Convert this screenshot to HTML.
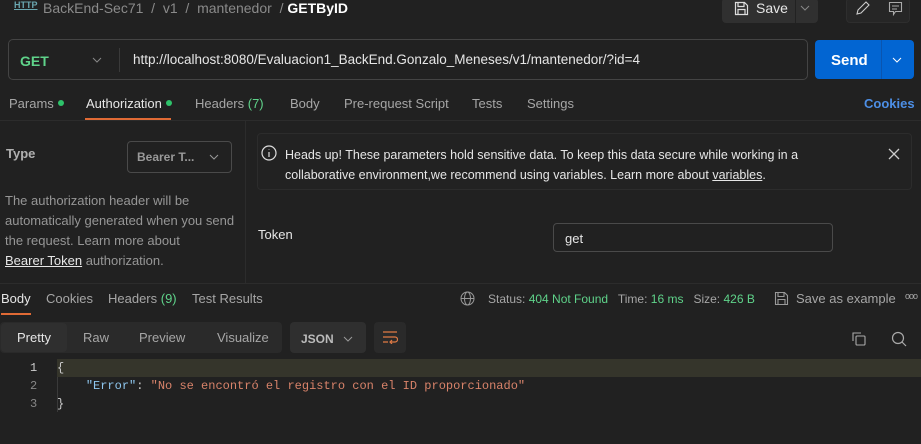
<!DOCTYPE html>
<html><head><meta charset="utf-8"><style>
*{box-sizing:border-box;margin:0;padding:0}
body{width:921px;height:444px;background:#212121;font-family:"Liberation Sans",sans-serif;font-size:13px;color:#a6a6a6;position:relative;overflow:hidden}
.a{position:absolute;white-space:nowrap}
.w{color:#e6e6e6}
.g{color:#5fd38a}
.dot{display:inline-block;width:6px;height:6px;border-radius:3px;background:#2ec26a;margin-left:4px;vertical-align:2px}
.mono{font-family:"Liberation Mono",monospace;font-size:12px;white-space:pre}
</style></head><body>
<!-- top bar -->
<div class="a" style="left:14px;top:0;font-size:9px;color:#6aa7b0;text-decoration:underline;font-weight:bold">HTTP</div>
<div class="a" style="left:43px;top:0;font-size:14px;color:#8a8a8a">BackEnd-Sec71 &nbsp;/&nbsp; v1 &nbsp;/&nbsp; mantenedor &nbsp;/&nbsp;<span style="color:#fff;font-weight:bold">GETByID</span></div>
<div class="a" style="left:722px;top:-2px;width:96px;height:25px;background:#303030;border-radius:4px"></div>
<div class="a" style="left:795px;top:0;width:1px;height:23px;background:#222"></div>
<svg class="a" style="left:734px;top:1px" width="15" height="15" viewBox="0 0 15 15" fill="none" stroke="#ddd" stroke-width="1.2"><path d="M1.5 1.5h9l3 3v9h-12z M4 1.5v4h6v-4 M4 13.5v-5h7v5"/></svg>
<div class="a w" style="left:756px;top:0;font-size:14px">Save</div>
<svg class="a" style="left:800px;top:5px" width="10" height="6"><path d="M1 1l4 4 4-4" stroke="#888" fill="none"/></svg>
<div class="a" style="left:846px;top:-2px;width:64px;height:25px;border-radius:4px;border:1px solid #2e2e2e;background:#262626"></div>
<svg class="a" style="left:854px;top:0" width="16" height="16" fill="none" stroke="#ccc" stroke-width="1.1"><path d="M3 14l1-4 8-8 3 3-8 8z"/></svg>
<svg class="a" style="left:888px;top:1px" width="15" height="15" fill="none" stroke="#aaa" stroke-width="1.1"><path d="M1.5 1.5h12v9h-6l-2 3v-3h-4z M4 5h7 M4 8h5"/></svg>
<!-- url bar -->
<div class="a" style="left:8px;top:39px;width:800px;height:41px;border:1px solid #444;border-radius:5px"></div>
<div class="a g" style="left:20px;top:53px;font-weight:bold;font-size:14px">GET</div>
<svg class="a" style="left:92px;top:57px" width="10" height="6"><path d="M1 1l4 4 4-4" stroke="#888" fill="none"/></svg>
<div class="a" style="left:119px;top:48px;width:1px;height:24px;background:#3a3a3a"></div>
<div class="a w" style="left:133px;top:52px;font-size:13.5px">http://localhost:8080/Evaluacion1_BackEnd.Gonzalo_Meneses/v1/mantenedor/?id=4</div>
<div class="a" style="left:815px;top:40px;width:99px;height:39px;background:#0265d2;border-radius:4px"></div>
<div class="a" style="left:881px;top:40px;width:1px;height:39px;background:#0a55b0"></div>
<div class="a" style="left:831px;top:52px;color:#fff;font-weight:bold;font-size:15px">Send</div>
<svg class="a" style="left:892px;top:57px" width="10" height="6"><path d="M1 1l4 4 4-4" stroke="#fff" fill="none"/></svg>
<!-- tabs -->
<div class="a" style="left:9px;top:96px">Params<span class="dot"></span></div>
<div class="a w" style="left:86px;top:96px">Authorization<span class="dot"></span></div>
<div class="a" style="left:85px;top:118px;width:86px;height:2px;background:#e06a35"></div>
<div class="a" style="left:195px;top:96px">Headers <span class="g">(7)</span></div>
<div class="a" style="left:290px;top:96px">Body</div>
<div class="a" style="left:344px;top:96px">Pre-request Script</div>
<div class="a" style="left:472px;top:96px">Tests</div>
<div class="a" style="left:527px;top:96px">Settings</div>
<div class="a" style="left:864px;top:96px;color:#4d8fe6;font-weight:bold">Cookies</div>
<div class="a" style="left:0;top:120px;width:921px;height:1px;background:#2c2c2c"></div>
<div class="a" style="left:245px;top:121px;width:1px;height:162px;background:#2c2c2c"></div>
<!-- auth left -->
<div class="a" style="left:6px;top:146px;font-weight:bold;color:#b0b0b0">Type</div>
<div class="a" style="left:127px;top:141px;width:105px;height:32px;border:1px solid #4a4a4a;border-radius:4px"></div>
<div class="a" style="left:137px;top:150px;font-size:12px;font-weight:bold;color:#999">Bearer T...</div>
<svg class="a" style="left:209px;top:154px" width="10" height="6"><path d="M1 1l4 4 4-4" stroke="#999" fill="none"/></svg>
<div class="a" style="left:5px;top:191px;line-height:20px;color:#969696;white-space:pre">The authorization header will be
automatically generated when you send
the request. Learn more about
<span style="color:#e6e6e6;text-decoration:underline">Bearer Token</span> authorization.</div>
<!-- info box -->
<div class="a" style="left:257px;top:133px;width:655px;height:57px;border:1px solid #2c2c2c;border-radius:4px;background:#222"></div>
<svg class="a" style="left:261px;top:145px" width="16" height="16" fill="none" stroke="#ddd" stroke-width="1.2"><circle cx="8" cy="8" r="7"/><path d="M8 7v5M8 4.5v.5"/></svg>
<div class="a w" style="left:285px;top:145px;line-height:20px;font-size:12.5px">Heads up! These parameters hold sensitive data. To keep this data secure while working in a<br>collaborative environment,we recommend using variables. Learn more about <span style="text-decoration:underline">variables</span>.</div>
<svg class="a" style="left:888px;top:148px" width="12" height="12" stroke="#ccc" stroke-width="1.3"><path d="M1 1l10 10M11 1l-10 10"/></svg>
<div class="a w" style="left:258px;top:227px">Token</div>
<div class="a" style="left:553px;top:223px;width:280px;height:29px;border:1px solid #4a4a4a;border-radius:4px"></div>
<div class="a w" style="left:565px;top:231px">get</div>
<div class="a" style="left:0;top:283px;width:921px;height:1px;background:#2c2c2c"></div>
<!-- response tabs -->
<div class="a w" style="left:1px;top:291px">Body</div>
<div class="a" style="left:1px;top:313px;width:30px;height:2px;background:#e06a35"></div>
<div class="a" style="left:46px;top:291px">Cookies</div>
<div class="a" style="left:108px;top:291px">Headers <span class="g">(9)</span></div>
<div class="a" style="left:192px;top:291px">Test Results</div>
<svg class="a" style="left:460px;top:291px" width="15" height="15" fill="none" stroke="#999" stroke-width="1"><circle cx="7.5" cy="7.5" r="6.5"/><ellipse cx="7.5" cy="7.5" rx="3" ry="6.5"/><path d="M1 7.5h13"/></svg>
<div class="a" style="left:488px;top:292px;font-size:12px">Status: <span class="g">404 Not Found</span> &nbsp; Time: <span class="g">16 ms</span> &nbsp; Size: <span class="g">426 B</span></div>
<svg class="a" style="left:774px;top:291px" width="15" height="15" fill="none" stroke="#999" stroke-width="1.1"><path d="M1.5 1.5h9l3 3v9h-12z M4 1.5v4h6v-4 M4 13.5v-5h7v5"/></svg>
<div class="a" style="left:796px;top:291px">Save as example</div>
<div class="a" style="left:905px;top:291px;font-size:9px;letter-spacing:-1px">ooo</div>
<!-- toolbar -->
<div class="a" style="left:0;top:322px;width:282px;height:31px;background:#2a2a2a;border-radius:4px"></div>
<div class="a" style="left:1px;top:323px;width:66px;height:29px;background:#2f2f2f;border-radius:4px"></div>
<div class="a w" style="left:17px;top:330px">Pretty</div>
<div class="a" style="left:83px;top:330px">Raw</div>
<div class="a" style="left:139px;top:330px">Preview</div>
<div class="a" style="left:217px;top:330px">Visualize</div>
<div class="a" style="left:290px;top:322px;width:76px;height:31px;background:#2f2f2f;border-radius:4px"></div>
<div class="a" style="left:301px;top:332px;font-size:12px;font-weight:bold;color:#bbb">JSON</div>
<svg class="a" style="left:343px;top:336px" width="10" height="6"><path d="M1 1l4 4 4-4" stroke="#999" fill="none"/></svg>
<div class="a" style="left:374px;top:322px;width:32px;height:31px;background:#2a2a2a;border-radius:4px"></div>
<svg class="a" style="left:382px;top:330px" width="16" height="14" fill="none" stroke="#e07a45" stroke-width="1.2"><path d="M1 2h14M1 7h12a2.5 2.5 0 010 5h-4M10 10l-2 2 2 2M1 12h5"/></svg>
<svg class="a" style="left:851px;top:331px" width="15" height="15" fill="none" stroke="#aaa" stroke-width="1.1"><rect x="5" y="5" width="9" height="9" rx="1"/><path d="M2 10V2h8"/></svg>
<svg class="a" style="left:891px;top:331px" width="16" height="16" fill="none" stroke="#aaa" stroke-width="1.2"><circle cx="7" cy="7" r="5.5"/><path d="M11 11l4 4"/></svg>
<!-- code -->
<div class="a" style="left:57px;top:359px;width:864px;height:18px;background:#35352b"></div>
<div class="a" style="left:57px;top:377px;width:1px;height:35px;background:#3a3a3a"></div>
<div class="a mono" style="left:30px;top:361px;color:#ccc">1</div>
<div class="a mono" style="left:30px;top:379px;color:#888">2</div>
<div class="a mono" style="left:30px;top:397px;color:#888">3</div>
<div class="a mono" style="left:57px;top:361px;color:#ccc">{</div>
<div class="a mono" style="left:57px;top:379px;color:#ccc">    <span style="color:#8fc8f0">"Error"</span>: <span style="color:#d9836a">"No se encontró el registro con el ID proporcionado"</span></div>
<div class="a mono" style="left:57px;top:397px;color:#ccc">}</div>
</body></html>
